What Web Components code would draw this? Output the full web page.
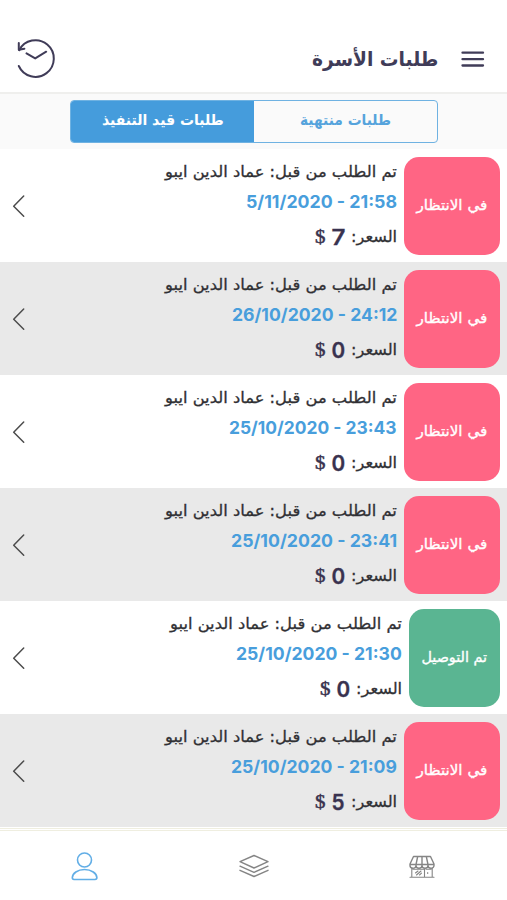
<!DOCTYPE html>
<html lang="ar">
<head>
<meta charset="utf-8">
<title>طلبات الأسرة</title>
<style>
	html, body { margin: 0; height: 100%; background: #fff; overflow: hidden; }
</style>
</head>
<body>
<orders-app></orders-app>

<script>
// <fit-text width="number">: one line of text, scaled horizontally to width px.
class FitText extends HTMLElement {
	constructor() {
		super();
		this.attachShadow({ mode: "open" });
		this.shadowRoot.innerHTML = `
			<style>
				:host { display: block; flex: none; white-space: nowrap; overflow: visible; direction: rtl; }
				span { display: inline-block; transform-origin: 100% 50%; }
			</style>
			<span><slot></slot></span>
		`;
	}

	connectedCallback() {
		const width = parseFloat(this.getAttribute("width"));
		const span = this.shadowRoot.querySelector("span");
		this.style.width = `${width}px`;
		span.style.transform = `scaleX(${width / span.offsetWidth})`;
	}
}

// <app-icon name="history|menu|back|user|layers|store">
const ICONS = {
	history: {
		size: [40, 42],
		body: `<path d="M2.800 28A18.300 18.300 0 1 0 3.200 12.200" stroke-width="2"/>
			<path d="M2.800 5v6.700l5.600-1M10.500 15.400l8.700 5 11-6.700" stroke-width="2"/>`,
	},
	menu: {
		size: [24, 18],
		body: `<path d="M1.500 2.700h20.500M1.500 9.200h20.500M1.500 15.500h20.500" stroke-width="2.300"/>`,
	},
	back: {
		size: [14, 24],
		body: `<path d="M11.700 2L1.700 12.200l10 10" stroke-width="1.500"/>`,
	},
	user: {
		size: [28, 30],
		body: `<circle cx="13.500" cy="9" r="7" stroke-width="1.600"/>
			<path d="M13.500 18.500C6.500 18.500 1.500 22.500 1.300 26.600Q1.300 28.500 3 28.500H24Q25.900 28.500 25.900 26.600C25.700 22.500 20.500 18.500 13.500 18.500Z" stroke-width="1.600"/>`,
	},
	layers: {
		size: [32, 24],
		body: `<path d="M2 7.700L16 1.500 30 7.700 16 14ZM2 12.200L16 18.300 30 12.200M2 16.300L16 22.500 30 16.300" stroke-width="1.400"/>`,
	},
	store: {
		size: [28, 24],
		body: `<path d="M4.500 2.500H21.500L25 10V11.500A3 2.700 0 0 1 19 11.500 3 2.700 0 0 1 13 11.500 3 2.700 0 0 1 7 11.500 3 2.700 0 0 1 1 11.500V10ZM1 10.500H25M8.700 2.500L7 10.500V11.500M13 2.500v9M17.300 2.500L19 10.500V11.500" stroke-width="1.400"/>
			<path d="M2.800 14V23M23.200 14V23M1 23.200H25M15.500 15V23M4 15.200H14.500M17 15.200H22M6.500 19l2.500-2M7.500 21l4.500-4M10.500 21l2-1.800M18.700 18.500v1" stroke-width="1.100"/>`,
	},
};

class AppIcon extends HTMLElement {
	constructor() {
		super();
		this.attachShadow({ mode: "open" });
	}

	connectedCallback() {
		const { size: [w, h], body } = ICONS[this.getAttribute("name")];
		this.shadowRoot.innerHTML = `
			<style>
				:host { display: block; flex: none; width: ${w}px; height: ${h}px; }
				svg { display: block; overflow: visible; }
			</style>
			<svg width="${w}" height="${h}" viewBox="0 0 ${w} ${h}" fill="none" stroke="currentColor" stroke-linecap="round" stroke-linejoin="round">${body}</svg>
		`;
	}
}

class AppHeader extends HTMLElement {
	constructor() {
		super();
		this.attachShadow({ mode: "open" });
		this.shadowRoot.innerHTML = `
			<style>
				:host {
					display: flex; align-items: center; flex: none; box-sizing: border-box;
					height: 94px; padding: 26px 22px 0 16px;
					border-bottom: 2px solid #efefed; color: #403c58;
				}
				.title { margin: 0 23px 0 auto; font: bold 20px/32px "DejaVu Sans", sans-serif; }
			</style>
			<app-icon name="history"></app-icon>
			<div class="title"><slot></slot></div>
			<app-icon name="menu"></app-icon>
		`;
	}
}

class SegmentTabs extends HTMLElement {
	constructor() {
		super();
		this.attachShadow({ mode: "open" });
		this.shadowRoot.innerHTML = `
			<style>
				:host { display: block; flex: none; box-sizing: border-box; height: 55.4px; padding: 6px 69px 0 70px; background: #fafafa; }
				.box {
					display: flex; box-sizing: border-box; height: 43px; overflow: hidden;
					border: 1.500px solid #6fb2e2; border-radius: 4px;
					font: bold 15px/38px "DejaVu Sans", sans-serif;
				}
				.tab { flex: 1; display: flex; justify-content: center; color: #55a3dc; }
				.on { background: #459cdc; color: #fff; }
			</style>
			<div class="box">
				<div class="tab on"><slot name="active"></slot></div>
				<div class="tab"><slot name="other"></slot></div>
			</div>
		`;
	}
}

// <order-row status="waiting|delivered" date time price w>
// w: width of the date line in px.
const STATUS = {
	waiting: { label: "في الانتظار", width: 70.5, color: "#ff6584" },
	delivered: { label: "تم التوصيل", width: 65.5, color: "#5ab592" },
};

class OrderRow extends HTMLElement {
	constructor() {
		super();
		this.attachShadow({ mode: "open" });
	}

	connectedCallback() {
		const status = STATUS[this.getAttribute("status")];
		this.shadowRoot.innerHTML = `
			<style>
				:host {
					display: flex; flex: none; direction: rtl; box-sizing: border-box;
					height: 113px; padding: 7.500px 7.500px 0 12px; background: #fff;
					font-family: "DejaVu Sans", sans-serif; color: #303034;
				}
				:host(:nth-of-type(even)) { background: #e9e9e9; }
				.badge {
					flex: none; display: flex; align-items: center; height: 98px; padding: 0 12.500px 2px; box-sizing: border-box;
					border-radius: 15px; background: ${status.color}; color: #fff; font-size: 14px; line-height: 22px;
					-webkit-text-stroke: .35px;
				}
				.info { flex: 1; margin-right: 7px; }
				.who { font-size: 15.500px; line-height: 30px; -webkit-text-stroke: .3px; }
				.date { font: 700 17.500px/30px Inter, sans-serif; color: #489edc; }
				.date span { direction: ltr; unicode-bidi: isolate; }
				.price { display: flex; align-items: center; height: 40px; font-size: 15.500px; -webkit-text-stroke: .3px; }
				.amount { margin-right: 6px; font: 600 21.500px/38px Inter, sans-serif; color: #39324f; }
				.currency { margin-right: 6px; font: 19px/38px "Liberation Serif", serif; color: #39324f; -webkit-text-stroke: .5px; }
				app-icon { margin-top: 37px; color: #4c4c4c; }
			</style>
			<div class="badge"><fit-text width="${status.width}">${status.label}</fit-text></div>
			<div class="info">
				<fit-text class="who" width="232">تم الطلب من قبل: عماد الدين ايبو</fit-text>
				<fit-text class="date" width="${this.getAttribute("w")}"><span>${this.getAttribute("date")} - ${this.getAttribute("time")}</span></fit-text>
				<div class="price">
					<fit-text width="46">السعر:</fit-text>
					<fit-text class="amount" width="13.5">${this.getAttribute("price")}</fit-text>
					<fit-text class="currency" width="11">$</fit-text>
				</div>
			</div>
			<app-icon name="back"></app-icon>
		`;
	}
}

class TabBar extends HTMLElement {
	constructor() {
		super();
		this.attachShadow({ mode: "open" });
		this.shadowRoot.innerHTML = `
			<style>
				:host {
					display: flex; flex: none; box-sizing: border-box; height: 72px;
					padding: 20px 0 0; border-top: 3.500px double #efeee0; background: #fff; color: #858585;
				}
				div { flex: 1; display: flex; justify-content: center; align-items: center; height: 30px; }
				.on { color: #62aee6; }
			</style>
			<div class="on"><app-icon name="user"></app-icon></div>
			<div><app-icon name="layers"></app-icon></div>
			<div><app-icon name="store"></app-icon></div>
		`;
	}
}

class OrdersApp extends HTMLElement {
	constructor() {
		super();
		this.attachShadow({ mode: "open" });
		this.shadowRoot.innerHTML = `
			<style>
				:host { display: flex; flex-direction: column; width: 507px; height: 900px; background: #fff; }
				main { flex: 1; min-height: 0; overflow: hidden; display: flex; flex-direction: column; }
			</style>
			<app-header><fit-text width="126">طلبات الأسرة</fit-text></app-header>
			<segment-tabs>
				<fit-text slot="active" width="122">طلبات قيد التنفيذ</fit-text>
				<fit-text slot="other" width="91">طلبات منتهية</fit-text>
			</segment-tabs>
			<main>
				<order-row status="waiting" date="5/11/2020" time="21:58" price="7" w="151"></order-row>
				<order-row status="waiting" date="26/10/2020" time="24:12" price="0" w="165"></order-row>
				<order-row status="waiting" date="25/10/2020" time="23:43" price="0" w="168"></order-row>
				<order-row status="waiting" date="25/10/2020" time="23:41" price="0" w="166"></order-row>
				<order-row status="delivered" date="25/10/2020" time="21:30" price="0" w="166"></order-row>
				<order-row status="waiting" date="25/10/2020" time="21:09" price="5" w="166"></order-row>
			</main>
			<tab-bar></tab-bar>
		`;
	}
}

customElements.define("fit-text", FitText);
customElements.define("app-icon", AppIcon);
customElements.define("app-header", AppHeader);
customElements.define("segment-tabs", SegmentTabs);
customElements.define("order-row", OrderRow);
customElements.define("tab-bar", TabBar);
customElements.define("orders-app", OrdersApp);
</script>
</body>
</html>
